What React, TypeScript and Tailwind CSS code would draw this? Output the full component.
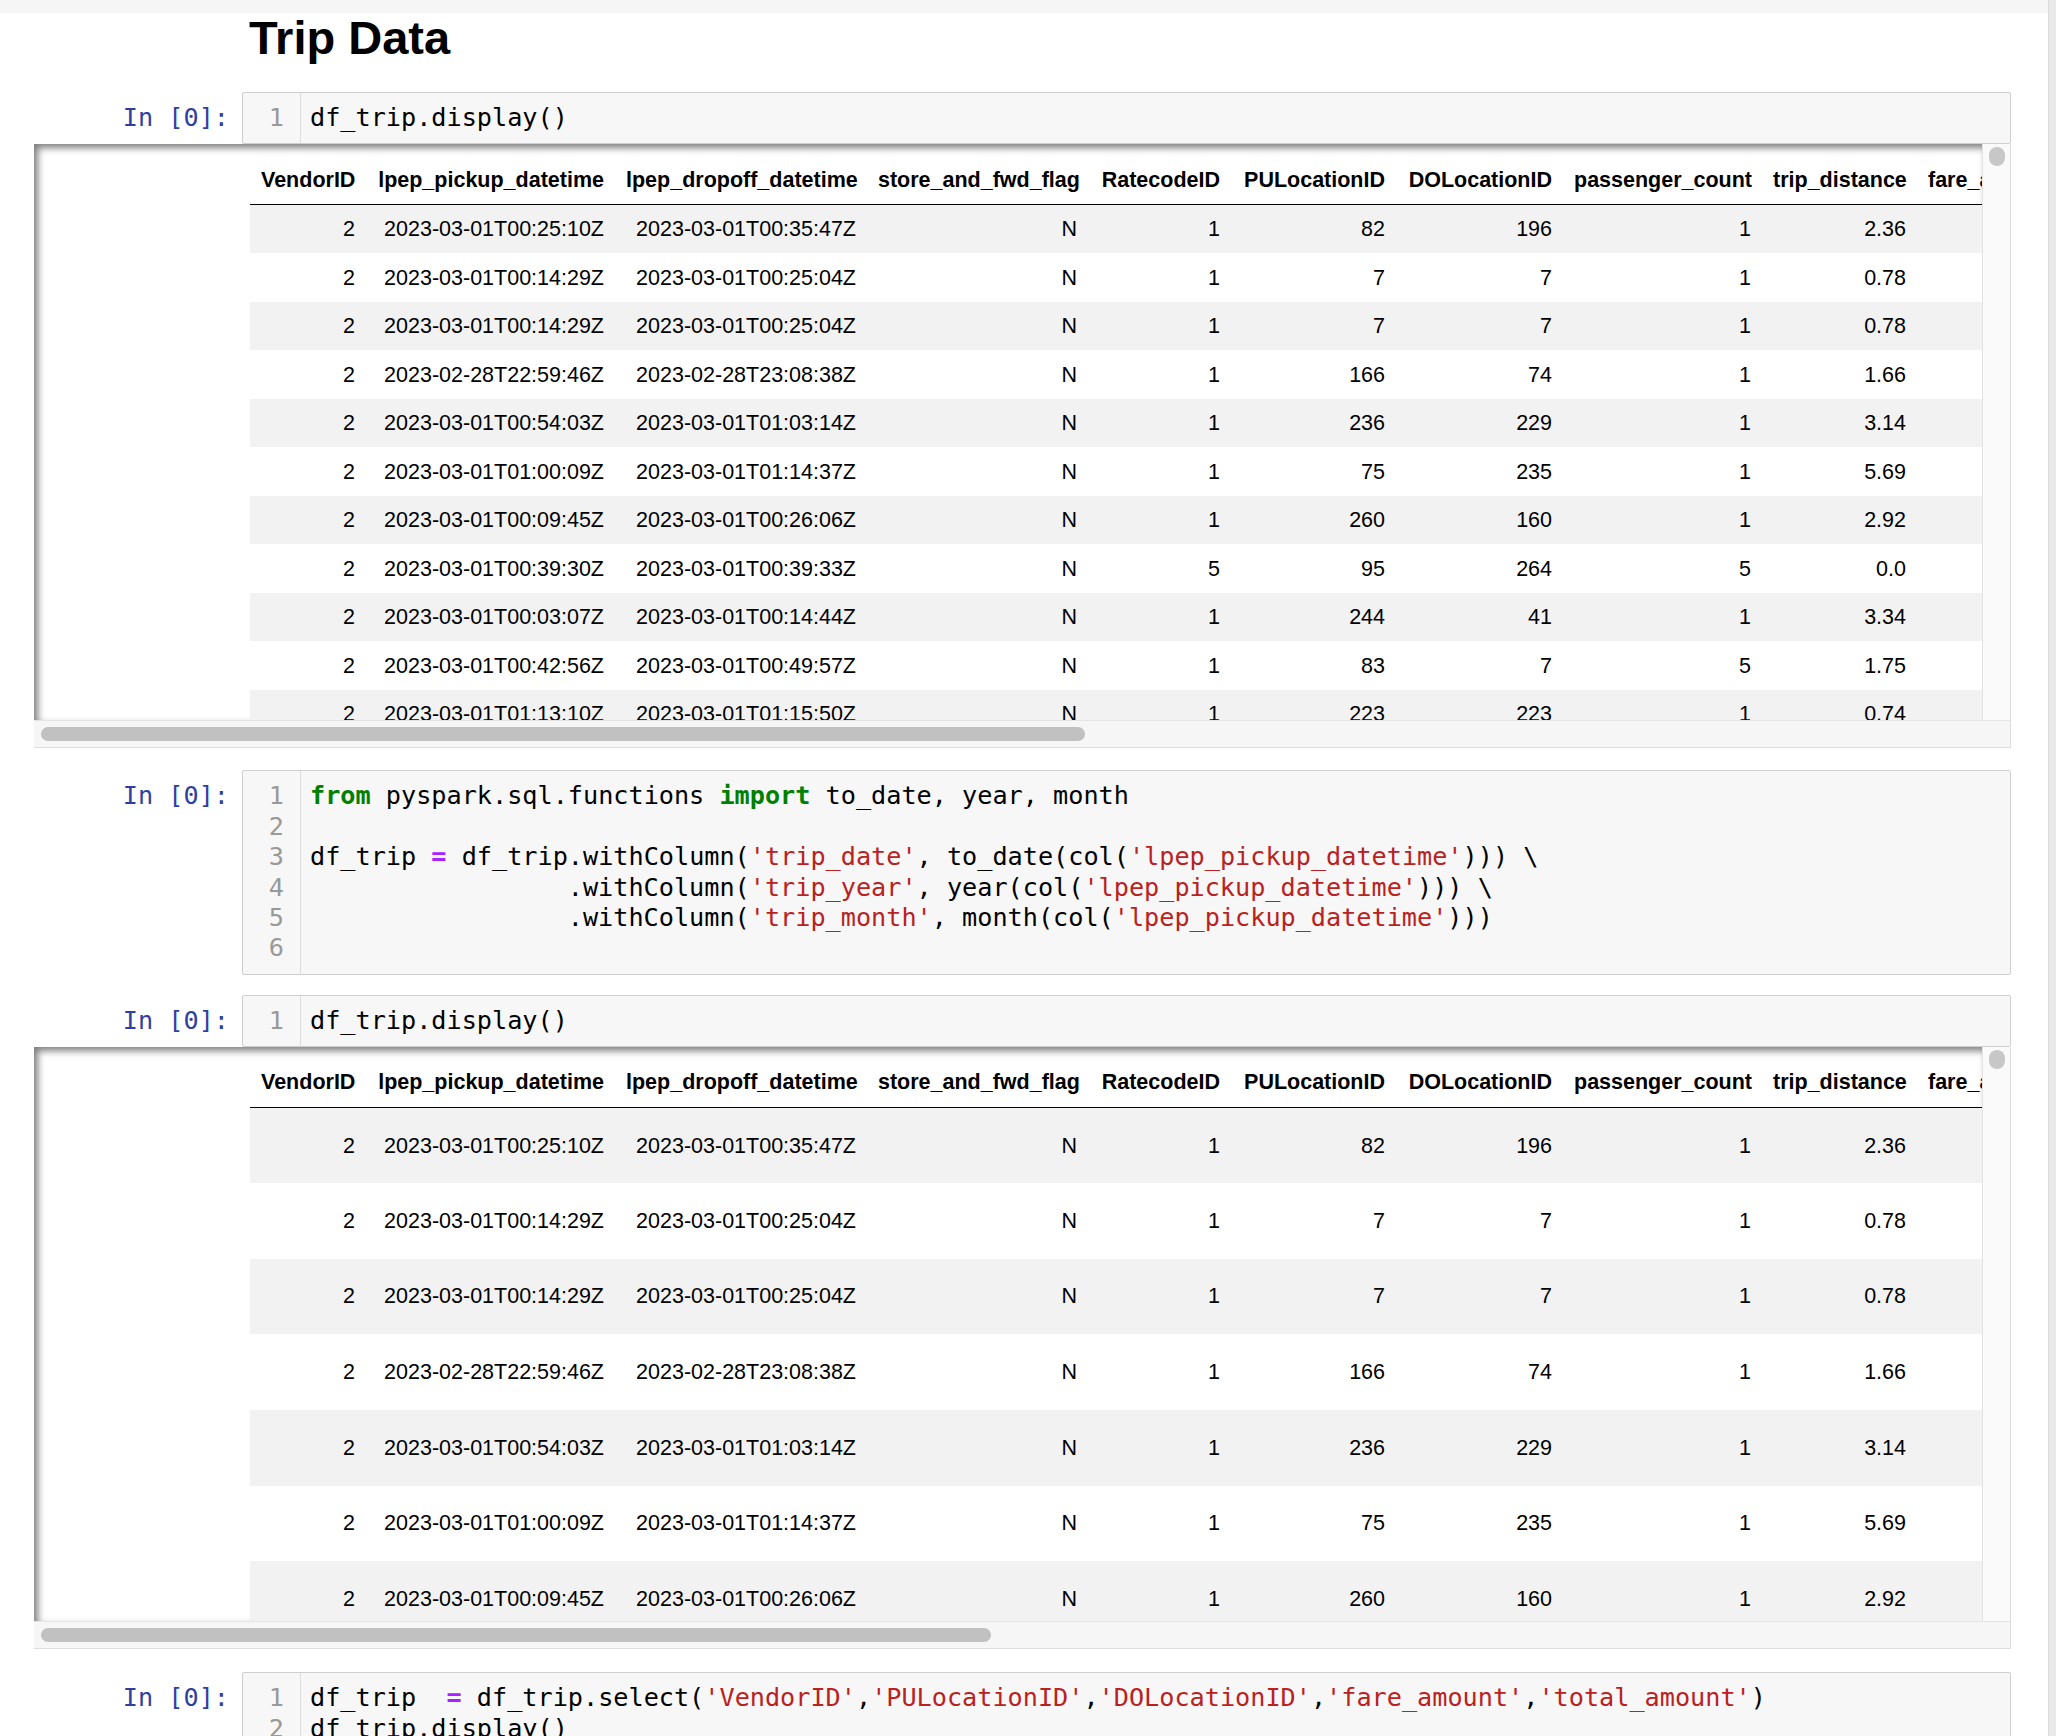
import React from "react";

type Tok = [string, string?];

const K = "text-[#008000] font-bold";
const O = "text-[#AA22FF] font-bold";
const S = "text-[#BA2121]";

const cell1: Tok[][] = [[["df_trip.display()"]]];

const cell2: Tok[][] = [
  [["from", K], [" pyspark.sql.functions "], ["import", K], [" to_date, year, month"]],
  [],
  [
    ["df_trip "],
    ["=", O],
    [" df_trip.withColumn("],
    ["'trip_date'", S],
    [", to_date(col("],
    ["'lpep_pickup_datetime'", S],
    ["))) \\"],
  ],
  [
    ["                 .withColumn("],
    ["'trip_year'", S],
    [", year(col("],
    ["'lpep_pickup_datetime'", S],
    ["))) \\"],
  ],
  [
    ["                 .withColumn("],
    ["'trip_month'", S],
    [", month(col("],
    ["'lpep_pickup_datetime'", S],
    [")))"],
  ],
  [],
];

const cell4: Tok[][] = [
  [
    ["df_trip  "],
    ["=", O],
    [" df_trip.select("],
    ["'VendorID'", S],
    [","],
    ["'PULocationID'", S],
    [","],
    ["'DOLocationID'", S],
    [","],
    ["'fare_amount'", S],
    [","],
    ["'total_amount'", S],
    [")"],
  ],
  [["df_trip.display()"]],
];

function CodeCell({ lines }: { lines: Tok[][] }) {
  return (
    <div className="flex font-['DejaVu_Sans_Mono',monospace] text-[25.2px] leading-[30.4px]">
      <div className="w-[242px] shrink-0 pr-[13px] pt-[11px] text-right text-[#303F9F] whitespace-pre">
        In [0]:
      </div>
      <div className="w-[1769px] shrink-0 flex border border-[#cfcfcf] rounded-[2px] bg-[#f7f7f7]">
        <div className="w-[58px] shrink-0 border-r border-[#dddddd] py-[10px] pr-[16px] text-right text-[#999999]">
          {lines.map((_, i) => (
            <div key={i} className="h-[30.4px]">
              {i + 1}
            </div>
          ))}
        </div>
        <div className="flex-1 py-[10px] pl-[9px] text-black">
          {lines.map((toks, i) => (
            <div key={i} className="h-[30.4px] whitespace-pre">
              {toks.map((t, j) => (
                <span key={j} className={t[1] ?? ""}>
                  {t[0]}
                </span>
              ))}
            </div>
          ))}
        </div>
      </div>
    </div>
  );
}

const headers = [
  "VendorID",
  "lpep_pickup_datetime",
  "lpep_dropoff_datetime",
  "store_and_fwd_flag",
  "RatecodeID",
  "PULocationID",
  "DOLocationID",
  "passenger_count",
  "trip_distance",
  "fare_amount",
];

const colW = [
  "w-[116px]",
  "w-[249px]",
  "w-[252px]",
  "w-[221px]",
  "w-[143px]",
  "w-[165px]",
  "w-[167px]",
  "w-[199px]",
  "w-[155px]",
  "w-[150px]",
];

const data: string[][] = [
  ["2", "2023-03-01T00:25:10Z", "2023-03-01T00:35:47Z", "N", "1", "82", "196", "1", "2.36", "14.9"],
  ["2", "2023-03-01T00:14:29Z", "2023-03-01T00:25:04Z", "N", "1", "7", "7", "1", "0.78", "10.7"],
  ["2", "2023-03-01T00:14:29Z", "2023-03-01T00:25:04Z", "N", "1", "7", "7", "1", "0.78", "10.7"],
  ["2", "2023-02-28T22:59:46Z", "2023-02-28T23:08:38Z", "N", "1", "166", "74", "1", "1.66", "10.0"],
  ["2", "2023-03-01T00:54:03Z", "2023-03-01T01:03:14Z", "N", "1", "236", "229", "1", "3.14", "14.2"],
  ["2", "2023-03-01T01:00:09Z", "2023-03-01T01:14:37Z", "N", "1", "75", "235", "1", "5.69", "23.3"],
  ["2", "2023-03-01T00:09:45Z", "2023-03-01T00:26:06Z", "N", "1", "260", "160", "1", "2.92", "17.7"],
  ["2", "2023-03-01T00:39:30Z", "2023-03-01T00:39:33Z", "N", "5", "95", "264", "5", "0.0", "15.0"],
  ["2", "2023-03-01T00:03:07Z", "2023-03-01T00:14:44Z", "N", "1", "244", "41", "1", "3.34", "16.3"],
  ["2", "2023-03-01T00:42:56Z", "2023-03-01T00:49:57Z", "N", "1", "83", "7", "5", "1.75", "9.3"],
  ["2", "2023-03-01T01:13:10Z", "2023-03-01T01:15:50Z", "N", "1", "223", "223", "1", "0.74", "5.8"],
];

function OutputTable({
  rowCount,
  rowClass,
  viewClass,
  thumbClass,
}: {
  rowCount: number;
  rowClass: string;
  viewClass: string;
  thumbClass: string;
}) {
  return (
    <div className="ml-[34px] w-[1977px] border-r border-b border-[#dedede] flex flex-col">
      <div className={"flex " + viewClass}>
        <div className="w-[1948px] shrink-0 overflow-hidden bg-white shadow-[inset_4px_4px_7px_rgba(0,0,0,0.5)] pl-[216px] pt-[10.5px]">
          <table className="border-collapse table-fixed w-[1817px] font-['Liberation_Sans',Arial,sans-serif] text-[21.5px] text-black">
            <colgroup>
              {colW.map((w, i) => (
                <col key={i} className={w} />
              ))}
            </colgroup>
            <thead>
              <tr>
                {headers.map((h) => (
                  <th
                    key={h}
                    className="h-[50px] px-[11px] text-right font-bold whitespace-nowrap border-b border-black align-middle"
                  >
                    {h}
                  </th>
                ))}
              </tr>
            </thead>
            <tbody>
              {data.slice(0, rowCount).map((r, i) => (
                <tr key={i} className={i % 2 === 0 ? "bg-[#f2f2f2]" : "bg-white"}>
                  {r.map((c, j) => (
                    <td
                      key={j}
                      className={
                        rowClass + " px-[11px] text-right whitespace-nowrap align-middle"
                      }
                    >
                      {c}
                    </td>
                  ))}
                </tr>
              ))}
            </tbody>
          </table>
        </div>
        <div className="w-[28px] shrink-0 bg-[#fafafa] border-l border-[#e2e2e2] pt-[3px] flex justify-center">
          <div className="w-[16px] h-[19px] rounded-full bg-[#c7c7c7]" />
        </div>
      </div>
      <div className="h-[27px] bg-[#f6f6f6] border-t border-[#e4e4e4] pt-[6px] pl-[7px]">
        <div className={"h-[14px] rounded-full bg-[#c1c1c1] " + thumbClass} />
      </div>
    </div>
  );
}

export default function App() {
  return (
    <div className="w-[2056px] h-[1736px] overflow-hidden bg-white flex">
      <div className="flex-1 flex flex-col">
        <div className="h-[13px] shrink-0 bg-[#f6f6f6]" />
        <div className="pl-[249px] pt-[2px] text-[47px] leading-[46px] font-bold text-black font-['Liberation_Sans',Arial,sans-serif]">
          Trip Data
        </div>
        <div className="mt-[31px]">
          <CodeCell lines={cell1} />
        </div>
        <OutputTable
          rowCount={11}
          rowClass="h-[48.5px]"
          viewClass="h-[576px]"
          thumbClass="w-[1044px]"
        />
        <div className="mt-[22px]">
          <CodeCell lines={cell2} />
        </div>
        <div className="mt-[20px]">
          <CodeCell lines={cell1} />
        </div>
        <OutputTable
          rowCount={7}
          rowClass="h-[75.6px]"
          viewClass="h-[574px]"
          thumbClass="w-[950px]"
        />
        <div className="mt-[23px]">
          <CodeCell lines={cell4} />
        </div>
      </div>
      <div className="w-[8px] shrink-0 bg-[#e9e9e9] border-l border-[#d9d9d9]" />
    </div>
  );
}
